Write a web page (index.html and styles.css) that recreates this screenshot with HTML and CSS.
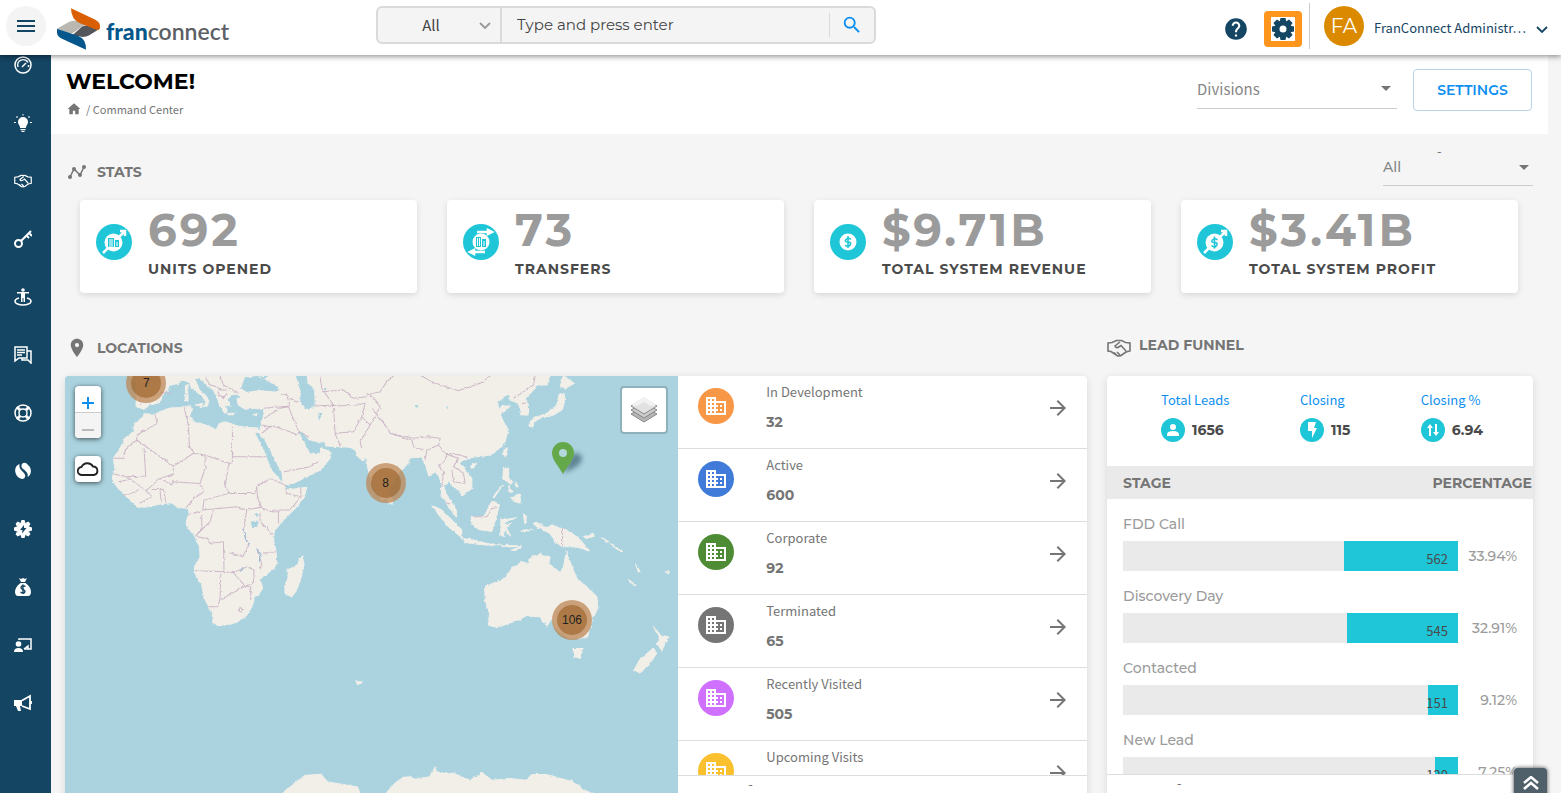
FILE: index.html
```html
<!DOCTYPE html>
<html lang="en">
<head>
  <meta charset="UTF-8" />
  <title>FranConnect - Command Center</title>
  <meta name="viewport" content="width=device-width, initial-scale=1.0" />
  <link rel="stylesheet" href="styles.css">
</head>
<body>

  <!-- Shared icons -->
  <svg class="icon-defs" aria-hidden="true">
    <symbol id="i-building" viewBox="0 0 24 24"><path d="M12 7V3H2v18h20V7H12zM6 19H4v-2h2v2zm0-4H4v-2h2v2zm0-4H4V9h2v2zm0-4H4V5h2v2zm4 12H8v-2h2v2zm0-4H8v-2h2v2zm0-4H8V9h2v2zm0-4H8V5h2v2zm10 12h-8v-2h2v-2h-2v-2h2v-2h-2V9h8v10zm-2-8h-2v2h2v-2zm0 4h-2v2h2v-2z"/></symbol>
    <symbol id="i-arrow" viewBox="0 0 24 24"><path d="M12 4l-1.41 1.41L16.17 11H4v2h12.17l-5.58 5.59L12 20l8-8z"/></symbol>
    <symbol id="i-caret" viewBox="0 0 10 5"><path d="M0 0h10L5 5z"/></symbol>
    <symbol id="i-chevron" viewBox="0 0 12 8"><path d="M1 1l5 5 5-5" fill="none" stroke="currentColor" stroke-width="1.8"/></symbol>
    <symbol id="i-handshake" viewBox="0 0 24 18"><path d="M1 4l4-.5 4.500-2h5l4 2 4.500.5v8l-4 1-5 3.500q-2 1-4 0l-6-4L1 12zM13 3L8 7q1 3 4.500.5L14 6.500l5 5.500M9 15.500l-2-2M13 16l-3-3" fill="none" stroke="currentColor" stroke-width="1.600"/></symbol>
  </svg>

  <!-- Top bar -->
  <header class="topbar">
    <div class="brand">
      <button class="menu-btn" aria-label="Menu">
        <svg width="18" height="12" viewBox="0 0 18 12"><path d="M0 0h18v2H0zM0 5h18v2H0zM0 10h18v2H0z"/></svg>
      </button>
      <a class="logo" href="#">
        <svg width="43" height="42" viewBox="171 25 129 125">
          <path fill="#b9b7af" d="M172 86l36-20q10-5 24-3l27 8-38 27q-8 5-20 1z"/>
          <path fill="#55565b" d="M217 106l29-25q8-6 22-3l31 9-31 19q-10 6-24 5z"/>
          <path fill="#d95f02" d="M213 25l70 33q17 8 17 20v6q-1 8-10 6l-50-20q-27-12-27-45z"/>
          <path fill="#05568b" d="M171 87l62 21q26 9 25 42l-72-33q-15-7-15-19z"/>
        </svg>
        <span><b>fran</b>connect</span>
      </a>
    </div>

    <form class="search">
      <div class="search-scope">
        <select aria-label="Search in"><option>All</option></select>
        <svg width="12" height="8"><use href="#i-chevron"/></svg>
      </div>
      <input type="text" aria-label="Search" placeholder="Type and press enter" />
      <button type="button" aria-label="Search">
        <svg width="22" height="22" viewBox="0 0 24 24"><path d="M15.500 14h-.79l-.28-.27A6.470 6.470 0 0 0 16 9.500 6.500 6.500 0 1 0 9.500 16c1.610 0 3.090-.59 4.230-1.570l.27.28v.79l5 4.990L20.490 19l-4.990-5zm-6 0C7.010 14 5 11.990 5 9.500S7.010 5 9.500 5 14 7.010 14 9.500 11.990 14 9.500 14z"/></svg>
      </button>
    </form>

    <div class="account">
      <button class="icon-btn" aria-label="Help">
        <svg width="26" height="26" viewBox="0 0 24 24"><path d="M12 2C6.480 2 2 6.480 2 12s4.480 10 10 10 10-4.480 10-10S17.520 2 12 2zm1 17h-2v-2h2v2zm2.070-7.750l-.9.92C13.450 12.900 13 13.500 13 15h-2v-.5c0-1.100.45-2.100 1.170-2.830l1.240-1.260c.37-.36.59-.86.59-1.410 0-1.100-.9-2-2-2s-2 .9-2 2H8c0-2.210 1.790-4 4-4s4 1.790 4 4c0 .88-.36 1.680-.93 2.250z"/></svg>
      </button>
      <button class="gear-btn" aria-label="Settings">
        <svg width="24" height="24" viewBox="-12 -12 24 24">
          <path fill="#fff" d="M-12-12h24v24h-24z"/>
          <path d="M-2.500-11h5l1 5h-7zM-2.500 11h5l1-5h-7zM-11-2.500v5l5 1v-7zM11-2.500v5l-5 1v-7z"/>
          <path transform="rotate(45)" d="M-2.500-11h5l1 5h-7zM-2.500 11h5l1-5h-7zM-11-2.500v5l5 1v-7zM11-2.500v5l-5 1v-7z"/>
          <circle r="8"/><circle r="3.500" fill="#fff"/>
        </svg>
      </button>
      <button class="user">
        <span class="avatar">FA</span>
        <span class="user-name">FranConnect Administr…</span>
        <svg width="12" height="8"><use href="#i-chevron"/></svg>
      </button>
    </div>
  </header>

  <div class="shell">
    <!-- Side navigation -->
    <nav class="sidenav">
      <a href="#" aria-label="Dashboard"><svg viewBox="0 0 18 18"><g fill="none" stroke="currentColor" stroke-width="1.500"><circle cx="9" cy="9" r="8"/><path d="M4 11a5.500 5.500 0 0 1 10-4.500M14.500 9v2M8 11l4-4"/></g></svg></a>
      <a href="#" aria-label="Ideas"><svg viewBox="0 0 18 18"><path d="M9 3a5 5 0 0 1 5 5c0 2.500-2 3.500-2.200 6H6.200C6 11.500 4 10.500 4 8a5 5 0 0 1 5-5zM6.500 15h5v1.200h-5zM7.500 17h3v1h-3zM8.500 0h1v1.500h-1zM0 8h2v1H0zM16 8h2v1h-2zM2 3l1-1 1 1-1 1zM14 3l1-1 1 1-1 1z"/></svg></a>
      <a href="#" aria-label="Sales"><svg viewBox="0 0 24 18"><use href="#i-handshake"/></svg></a>
      <a href="#" aria-label="Openings"><svg viewBox="0 0 18 18"><g fill="none" stroke="currentColor" stroke-width="2"><circle cx="4.500" cy="13.500" r="3.500"/><path d="M7 11L17 1M12.500 5.500L15 8M15 3l3 3"/></g></svg></a>
      <a href="#" aria-label="Locations"><svg viewBox="0 0 18 18"><circle cx="9" cy="2" r="1.800"/><path d="M3 4h12v1.500h-4V14H9.500v-4h-1v4H7V5.500H3z"/><path d="M5 10q-4 1-4 3.500c0 2 4 3.500 8 3.500s8-1.500 8-3.500Q17 11 13 10" fill="none" stroke="currentColor" stroke-width="1.600"/></svg></a>
      <a href="#" aria-label="Messages"><svg viewBox="0 0 18 18"><path d="M1 1h12v11H5l-4 3zM3 4h8M3 6.500h8M3 9h5M13 5h4v12l-3-3H8v-2" fill="none" stroke="currentColor" stroke-width="1.500"/></svg></a>
      <a href="#" aria-label="Support"><svg viewBox="0 0 18 18"><g fill="none" stroke="currentColor" stroke-width="1.500"><circle cx="9" cy="9" r="8"/><circle cx="9" cy="9" r="4"/></g><path d="M3 3l3 3M15 3l-3 3M3 15l3-3M15 15l-3-3" stroke="currentColor" stroke-width="3"/></svg></a>
      <a href="#" aria-label="Finance"><svg viewBox="0 0 18 18"><path d="M5.500 2C0 4 0 11 4 15c2 2 6 3 7 0 1-2-1-4-3-6S5 5 5.500 2zM7.500 3.500C8 0 12 0 14 3c4 3 4 10-.5 12 1-3-.5-4.500-3-7C8.500 6.500 7 5.500 7.500 3.500z"/></svg></a>
      <a href="#" aria-label="Automation"><svg viewBox="-9 -9 18 18"><path d="M-1.500-9h3l1 3h-5zM-1.500 9h3l1-3h-5zM-9-1.500v3l3 1v-5zM9-1.500v3l-3 1v-5z"/><path transform="rotate(45)" d="M-1.500-9h3l1 3h-5zM-1.500 9h3l1-3h-5zM-9-1.500v3l3 1v-5zM9-1.500v3l-3 1v-5z"/><circle r="6.500"/><path fill="#144563" d="M1-4l-4 5h2.500L-1 4.500 3.500-1H1z"/></svg></a>
      <a href="#" aria-label="Royalties"><svg viewBox="0 0 18 18"><path d="M5 0l2 1 2-1 2 1 2-1-2 4H7zM6.500 5h5c4 3 5.500 6 5.500 9 0 2-1 4-3 4H4c-2 0-3-2-3-4 0-3 1.500-6 5.500-9z"/><path d="M11.500 8.500Q9 7 7.500 8.500T9 11.500t1.500 3T6.500 14M9 6.500V16" fill="none" stroke="#144563" stroke-width="1.400"/></svg></a>
      <a href="#" aria-label="Training"><svg viewBox="0 0 18 18"><circle cx="4.500" cy="8" r="2.800"/><path d="M0 16q0-4 4.500-4T9 16z"/><path d="M5 4V3h12v10h-7M10 13l4-3v3" fill="none" stroke="currentColor" stroke-width="1.500"/></svg></a>
      <a href="#" aria-label="Marketing"><svg viewBox="0 0 18 18"><path d="M0 6h8v6H6l1 5H4l-2-5H0z"/><path d="M8 6.500L16 2v13l-8-3M17 7v3" fill="none" stroke="currentColor" stroke-width="1.800"/></svg></a>
    </nav>

    <main class="content">
      <!-- Page title -->
      <section class="page-head">
        <div>
          <h1>WELCOME!</h1>
          <p class="crumbs">
            <a href="#" aria-label="Home"><svg width="14" height="14" viewBox="0 0 24 24"><path d="M10 21v-6h4v6h6v-9h3L12 2 1 12h3v9z"/></svg></a>
            / Command Center
          </p>
        </div>
        <div class="head-actions">
          <div class="field field-wide">
            <select aria-label="Divisions"><option>Divisions</option></select>
            <svg width="10" height="5"><use href="#i-caret"/></svg>
          </div>
          <button class="settings-btn">SETTINGS</button>
        </div>
      </section>

      <!-- Stats -->
      <section class="stats">
        <div class="section-head">
          <h2>
            <svg width="20" height="20" viewBox="0 0 20 20"><path d="M3 15l4-8 6 6 4-8" fill="none" stroke="currentColor" stroke-width="1.500"/><circle cx="3" cy="15" r="2"/><circle cx="7" cy="7" r="2"/><circle cx="13" cy="13" r="2"/><circle cx="17" cy="5" r="2"/></svg>
            STATS
          </h2>
          <div class="stats-filter">
            <span>-</span>
            <div class="field">
              <select aria-label="Stats filter"><option>All</option></select>
              <svg width="10" height="5"><use href="#i-caret"/></svg>
            </div>
          </div>
        </div>

        <div class="stat-cards">
          <article class="stat">
            <svg class="badge" viewBox="0 0 36 36"><path d="M7 29l5-5M22 14l6-6M24 7h5v5" fill="none" stroke="currentColor" stroke-width="2.500"/><circle cx="17.500" cy="18.500" r="9"/><path fill="#1ec6d7" d="M12 14h6v9h-6zM18 16h5v7h-5z"/><path d="M14 15v8M16 15v8M18.500 16v7M21 18v4" stroke="currentColor"/></svg>
            <div><strong>692</strong><span>UNITS OPENED</span></div>
          </article>
          <article class="stat">
            <svg class="badge" viewBox="0 0 36 36"><path d="M14 8h14M25 6v4l4-2zM8 28h14M11 26v4l-4-2z" fill="none" stroke="currentColor" stroke-width="2.500"/><circle cx="18" cy="18" r="8.500"/><path fill="#1ec6d7" d="M13 13h5v10h-5zM18 15h5v8h-5z"/><path d="M14.500 14v8M16.500 14v8M18.500 15v8M21 17v5" stroke="currentColor"/></svg>
            <div><strong>73</strong><span>TRANSFERS</span></div>
          </article>
          <article class="stat">
            <svg class="badge" viewBox="0 0 36 36"><circle cx="18" cy="18" r="8.500"/><path d="M21 15.500q-3-2.500-5 0t2 2.500 2 3-5 0M18 12v12" fill="none" stroke="#1ec6d7" stroke-width="1.600"/></svg>
            <div><strong>$9.71B</strong><span>TOTAL SYSTEM REVENUE</span></div>
          </article>
          <article class="stat">
            <svg class="badge" viewBox="0 0 36 36"><path d="M7 29l5-5M22 14l6-6M24 7h5v5" fill="none" stroke="currentColor" stroke-width="2.500"/><circle cx="17.500" cy="18.500" r="9"/><path d="M20.500 16q-3-2.500-5 0t2 2.500 2 3-5 0M17.500 12.500v12" fill="none" stroke="#1ec6d7" stroke-width="1.600"/></svg>
            <div><strong>$3.41B</strong><span>TOTAL SYSTEM PROFIT</span></div>
          </article>
        </div>
      </section>

      <div class="panels">
        <!-- Locations -->
        <section>
          <h2>
            <svg width="24" height="20" viewBox="0 0 24 24"><path d="M12 1C8 1 4.500 4 4.500 8.500 4.500 14 12 23 12 23s7.500-9 7.500-14.500C19.500 4 16 1 12 1zm0 10a2.500 2.500 0 0 1 0-5 2.500 2.500 0 0 1 0 5z"/></svg>
            LOCATIONS
          </h2>
          <div class="panel locations">
            <div class="map">
              <svg class="map-canvas" viewBox="15 18 1839 1251">
                <defs>
                  <filter id="coast" x="0" y="0" width="1" height="1">
                    <feTurbulence type="fractalNoise" baseFrequency=".08" numOctaves="3" seed="4"/>
                    <feDisplacementMap in="SourceGraphic" scale="9" xChannelSelector="R" yChannelSelector="G"/>
                  </filter>
                </defs>
                <g filter="url(#coast)">
                  <path fill="#aad3df" d="M0 0h1900v1300H0z"/>
                  <g class="land">
                    <!-- Africa -->
                    <path d="M252 131L285 133 300 125 330 114 372 112 392 110 396 125 388 140 402 155 438 165 468 180 478 160 500 155 530 168 560 172 595 174 600 188 583 187 597 215 612 245 625 280 632 298 655 325 672 345 678 360 740 352 735 372 715 405 690 430 665 455 645 480 638 500 648 545 650 582 635 600 600 628 607 650 604 668 584 680 578 705 560 735 540 750 515 762 490 764 472 769 458 755 460 740 445 710 432 680 425 645 405 610 403 590 420 560 418 530 405 500 380 468 378 455 387 430 384 415 352 412 335 398 300 402 265 410 238 412 215 395 195 375 175 355 160 335 157 320 165 300 160 265 180 235 195 205 220 185 225 160 250 140z"/>
                    <!-- Eurasia -->
                    <path d="M200 0L215 25 230 35 228 108 250 118 270 105 298 98 303 80 325 60 330 45 355 40 368 30 383 35 400 58 428 80 438 95 430 110 442 108 447 95 440 80 420 62 412 45 405 28 418 22 435 40 460 60 470 80 480 110 495 130 502 122 495 105 512 108 500 90 512 75 530 72 545 82 530 88 535 105 555 118 580 115 612 115 608 150 598 185 603 200 612 205 630 240 650 280 665 305 672 345 700 340 745 318 780 300 810 265 812 250 785 232 780 250 750 252 735 225 725 205 712 185 728 185 745 208 770 215 790 215 800 228 870 232 885 240 895 260 910 272 920 260 922 290 935 340 965 390 978 385 990 350 1015 310 1045 278 1050 263 1085 262 1095 285 1107 318 1125 305 1137 320 1145 350 1143 372 1160 400 1180 430 1190 442 1188 420 1170 390 1158 372 1150 345 1165 335 1180 350 1200 362 1205 378 1235 355 1235 325 1215 300 1200 280 1215 265 1240 262 1290 255 1315 240 1335 215 1343 180 1330 155 1320 135 1350 108 1330 108 1318 115 1310 95 1345 75 1350 90 1375 100 1385 135 1405 135 1405 105 1395 85 1415 65 1430 45 1460 45 1475 0z"/>
                    <!-- Mediterranean islands -->
                    <path d="M376 48L384 48 383 68 376 68zM374 74L384 72 384 90 376 92zM408 104L428 100 424 113zM502 130L524 130 520 134 504 134zM580 134L594 130 590 137zM270 77L280 75 280 80z"/>
                    <!-- Madagascar, Sri Lanka, Hainan, Taiwan, Japan -->
                    <path d="M727 558L732 585 722 625 710 660 695 680 675 670 674 645 684 625 680 600 705 590zM988 378L1000 390 995 402 984 398zM1230 290L1248 279 1240 294zM1334 235L1342 235 1335 260 1328 250zM1497 70L1513 75 1512 98 1505 120 1480 135 1440 145 1420 155 1420 170 1410 170 1410 155 1424 143 1460 130 1490 105zM1510 18L1542 40 1515 55 1500 48z"/>
                    <!-- Philippines and Indonesia -->
                    <path d="M1330 292L1345 295 1346 325 1358 340 1350 342 1328 325zM1365 330L1374 350 1366 350zM1344 345L1358 365 1350 368zM1352 385L1378 372 1382 400 1365 395zM1328 345L1298 380 1302 382zM1115 405L1145 420 1190 465 1205 480 1205 502 1170 475 1140 440zM1205 505L1240 510 1280 520 1310 525 1275 525 1220 518zM1312 524L1350 526 1385 528 1350 531zM1355 540L1380 530 1366 542zM1233 440L1270 440 1295 395 1318 405 1308 440 1295 485 1255 478 1235 460zM1322 450L1370 443 1335 454 1330 465 1352 460 1338 473 1352 498 1342 490 1332 475 1330 500 1322 495zM1390 432L1400 440 1394 462zM1380 480L1420 480 1390 485z"/>
                    <path d="M1420 460L1445 462 1450 472 1475 465 1530 485 1560 510 1590 545 1550 530 1507 530 1485 515 1470 490 1430 470zM1570 500L1598 490 1602 498 1580 506zM1622 502L1645 514 1640 516zM1650 520L1686 544 1680 545zM1704 628L1728 646 1722 646zM1815 605L1824 602 1824 611zM1725 580L1740 605 1734 605z"/>
                    <!-- Australia and New Zealand -->
                    <path d="M1273 650L1335 625 1355 595 1385 575 1405 580 1415 560 1440 552 1470 560 1465 580 1500 608 1510 590 1518 545 1535 590 1550 625 1585 655 1610 680 1613 715 1595 750 1582 800 1530 805 1490 780 1475 745 1460 768 1440 740 1400 738 1360 755 1310 772 1285 765 1288 730 1275 690zM1538 835L1568 835 1560 865 1545 860zM1778 768L1800 795 1825 800 1805 840 1788 822 1798 805zM1778 835L1792 845 1765 885 1742 906 1720 902 1738 870z"/>
                    <!-- Antarctica -->
                    <path d="M651 1280L705 1240 735 1215 783 1212 801 1235 892 1250 904 1280zM968 1280L1006 1238 1036 1217 1066 1227 1109 1220 1123 1190 1130 1205 1181 1210 1229 1230 1265 1208 1295 1230 1350 1225 1398 1230 1416 1213 1458 1213 1536 1235 1573 1260 1621 1280zM888 932L905 936 892 944z"/>
                  </g>
                  <!-- Inland seas and lakes -->
                  <path fill="#aad3df" d="M542 55L555 22 590 18 612 30 652 48 658 66 600 60 560 66zM600 18L625 18 610 30zM705 10L740 18 742 40 762 55 764 110 735 118 720 92 722 65zM775 130l8 2-2 20-6-5zM790 55l10-2-4 8zM1065 105l8 0 0 8-8-2zM1153 110l10 0 0 8zM572 455l20-4 0 20-16 0zM585 430l14 4-8 8z"/>
                  <!-- Borders -->
                  <g class="borders">
                    <path d="M285 133L292 160 230 195 230 210 195 240 192 265 160 265M230 210L340 288 400 250 435 255 507 280 517 278 517 170M517 260L618 260M372 112L385 165 388 230 402 248M252 235L257 318 200 320 160 312M340 288L340 312 300 325 258 362 235 345 200 320M258 362L275 380 238 400M275 358L310 358 318 400M310 330L335 345 338 335 420 340 435 295 435 255M420 340L432 365 400 385 378 415M507 280L495 350 510 370 585 370 590 350M507 370L432 390 428 420 385 435M425 435L425 475 405 500M428 420L530 410 560 420 600 412 635 425 655 425 655 460M590 350L592 380 605 415M632 325L590 350M632 325L675 345 680 370 722 380 722 355M722 380L690 420 640 420M560 420L550 480 565 525 548 560 508 548M410 500L440 505 450 520 490 515 492 605 405 602M490 605L520 608 560 590 582 600 580 640 555 648 520 608M482 612L480 685 473 710 445 710M480 690L555 648 572 650 572 690M540 712l10 4-6 10-8-4zM600 430L600 455 638 492M600 550L648 545M590 535L605 580 600 597M460 420L450 455 412 492M300 360L303 395M190 375L215 370 235 360M175 335L200 330"/>
                    <path d="M605 190L630 170 605 165M612 145L660 115 685 110 715 185 745 200M630 165L690 185 712 195M672 305L750 290 775 275M612 115L690 108 680 75 660 70M690 85L715 95M765 108L820 105 825 190 840 228M825 190L880 185 905 140 915 100 890 105 830 108 820 105 785 55 780 20M785 65L850 60 880 85 920 80M920 75L960 65 980 35 1000 18M905 140L930 165 900 215 905 240M930 165L960 110 930 75M935 115L975 165 990 190 1055 210 1060 230 1090 240M990 190L1060 205 1105 200 1140 205 1135 225 1100 240 1095 270M1135 225L1160 255 1150 280 1135 285 1150 310 1145 350M1165 255L1195 265 1180 290 1210 310 1215 340 1180 335 1175 300M1155 250L1200 255 1220 262M1085 18L1125 40 1195 62 1260 40 1290 18M1360 85L1420 45 1425 18M1382 102L1398 98M1240 440L1280 440 1295 415 1310 412M1158 398L1170 402M1507 477L1507 530M240 52L242 105M300 68L330 70M435 20L450 45 470 50 480 60 500 60M480 18L490 45 535 70M470 65L490 85 500 70M240 50L228 58"/>
                  </g>
                  <path d="M553 478L555 505 567 525M590 535L600 550 598 575M540 605L550 595" fill="none" stroke="#8fb8d4" stroke-width="3"/>
                </g>
              </svg>

              <div class="zoom-ctrl">
                <button aria-label="Zoom in"><svg width="14" height="14" viewBox="0 0 14 14"><path d="M6 1h2v5h5v2H8v5H6V8H1V6h5z"/></svg></button>
                <button class="off" aria-label="Zoom out"><svg width="14" height="14" viewBox="0 0 14 14"><path d="M1 6h12v2H1z"/></svg></button>
              </div>
              <button class="cloud-ctrl" aria-label="Weather"><svg width="22" height="16" viewBox="0 0 22 16"><path d="M5 14a4 4 0 0 1-.5-8A6.500 6.500 0 0 1 16 5.500 4.300 4.300 0 0 1 17 14z" fill="none" stroke="currentColor" stroke-width="1.800"/></svg></button>
              <button class="layers-ctrl" aria-label="Layers">
                <svg width="28" height="28" viewBox="0 0 28 28"><path fill="#b5b5b5" stroke="#888" d="M1 18l13 8 13-8-13-7z"/><path fill="#ccc" stroke="#858585" d="M1 14l13 8 13-8-13-7z"/><path fill="#e2e2e2" stroke="#888" d="M1 10l13 8 13-8-13-8z"/><path fill="#f2f2f2" d="M1 9l13-8 13 8-7 1-6-4-7 4z"/></svg>
              </button>

              <span class="cluster c-europe"><span>7</span></span>
              <span class="cluster c-india"><span>8</span></span>
              <span class="cluster c-australia"><span>106</span></span>
              <svg class="pin" width="42" height="34" viewBox="0 0 42 34">
                <defs><filter id="soft" x="-.5" y="-.5" width="2" height="2"><feGaussianBlur stdDeviation="2.500"/></filter></defs>
                <path d="M11 31L20 12q9-3 10 5-2 8-19 14z" fill="#35596a" opacity=".65" filter="url(#soft)"/>
                <path fill="#65a84a" d="M11 0a11 11 0 0 1 11 11c0 7-8 15-11 21C8 26 0 18 0 11A11 11 0 0 1 11 0z"/><circle cx="11" cy="11" r="4" fill="#b3d9dc"/>
              </svg>
            </div>

            <div class="location-side">
              <ul class="location-list">
                <li><span class="dot orange"><svg><use href="#i-building"/></svg></span><div><span>In Development</span><b>32</b></div><a href="#" aria-label="In Development"><svg><use href="#i-arrow"/></svg></a></li>
                <li><span class="dot blue"><svg><use href="#i-building"/></svg></span><div><span>Active</span><b>600</b></div><a href="#" aria-label="Active"><svg><use href="#i-arrow"/></svg></a></li>
                <li><span class="dot green"><svg><use href="#i-building"/></svg></span><div><span>Corporate</span><b>92</b></div><a href="#" aria-label="Corporate"><svg><use href="#i-arrow"/></svg></a></li>
                <li><span class="dot grey"><svg><use href="#i-building"/></svg></span><div><span>Terminated</span><b>65</b></div><a href="#" aria-label="Terminated"><svg><use href="#i-arrow"/></svg></a></li>
                <li><span class="dot purple"><svg><use href="#i-building"/></svg></span><div><span>Recently Visited</span><b>505</b></div><a href="#" aria-label="Recently Visited"><svg><use href="#i-arrow"/></svg></a></li>
                <li><span class="dot yellow"><svg><use href="#i-building"/></svg></span><div><span>Upcoming Visits</span></div><a href="#" aria-label="Upcoming Visits"><svg><use href="#i-arrow"/></svg></a></li>
              </ul>
              <p class="panel-foot">-</p>
            </div>
          </div>
        </section>

        <!-- Lead funnel -->
        <section>
          <h2 class="funnel-title">
            <svg width="24" height="18"><use href="#i-handshake"/></svg>
            LEAD FUNNEL
          </h2>
          <div class="panel funnel">
            <div class="funnel-scroll">
              <div class="kpis">
                <div><a href="#">Total Leads</a><p><svg class="badge" viewBox="0 0 24 24"><path d="M12 6a3 3 0 1 1 0 6 3 3 0 0 1 0-6zm0 7c4 0 6 1.500 6 3v2H6v-2c0-1.500 2-3 6-3z"/></svg>1656</p></div>
                <div><a href="#">Closing</a><p><svg class="badge" viewBox="0 0 24 24"><path d="M8 4h8l-2 6h3l-5 10v-7H8z"/></svg>115</p></div>
                <div><a href="#">Closing %</a><p><svg class="badge" viewBox="0 0 24 24"><path d="M9 6l3 4h-2v8H8v-8H6zM15 18l-3-4h2V6h2v8h2z"/></svg>6.94</p></div>
              </div>
              <table>
                <thead><tr><th>STAGE</th><th>PERCENTAGE</th></tr></thead>
                <tbody>
                  <tr><td>FDD Call<div class="bar"><span style="width:34%">562</span></div></td><td>33.94%</td></tr>
                  <tr><td>Discovery Day<div class="bar"><span style="width:33%">545</span></div></td><td>32.91%</td></tr>
                  <tr><td>Contacted<div class="bar"><span style="width:9%">151</span></div></td><td>9.12%</td></tr>
                  <tr><td>New Lead<div class="bar"><span style="width:7%">120</span></div></td><td>7.25%</td></tr>
                </tbody>
              </table>
            </div>
            <p class="panel-foot">-</p>
          </div>
        </section>
      </div>
    </main>
  </div>

  <button class="to-top" aria-label="Back to top">
    <svg width="16" height="14" viewBox="0 0 16 14"><path d="M1 7l7-6 7 6M1 13l7-6 7 6" fill="none" stroke="currentColor" stroke-width="2.500"/></svg>
  </button>

</body>
</html>
```

FILE: styles.css
```css
* {
  box-sizing: border-box;
}

body {
  margin: 0;
  height: 100vh;
  overflow: hidden;
  display: flex;
  flex-direction: column;
  background: #f5f5f5;
  color: #757575;
  font: 13px/20px "Noto Sans CJK SC", sans-serif;
}

h1, h2, p, ul {
  margin: 0;
  padding: 0;
}

a {
  color: inherit;
  text-decoration: none;
}

svg {
  display: block;
  flex: none;
  fill: currentColor;
}

button, input, select {
  font: inherit;
  color: inherit;
  border: none;
  background: none;
  padding: 0;
}

button {
  cursor: pointer;
}

select {
  appearance: none;
  outline: none;
}

.icon-defs {
  position: absolute;
  width: 0;
  height: 0;
}

/* Top bar */
.topbar {
  position: relative;
  z-index: 2;
  flex: none;
  display: flex;
  align-items: flex-start;
  height: 55px;
  padding: 6px 13px 0 6px;
  background: #fff;
  color: #144563;
  box-shadow: 0 1px 6px rgba(0, 0, 0, 0.5);
}

.brand {
  display: flex;
  gap: 11px;
  flex: none;
  width: 370px;
}

.menu-btn {
  display: flex;
  align-items: center;
  justify-content: center;
  width: 40px;
  height: 40px;
  border-radius: 50%;
  background: #f4f4f4;
}

.logo {
  display: flex;
  gap: 6px;
  padding-top: 2px;
  color: #5d5f66;
  font: 600 23px/46px Lato, sans-serif;
}

.logo b {
  color: #05568b;
}

.search {
  display: flex;
  flex: 0 1 500px;
  height: 38px;
  border: 2px solid #dadada;
  border-radius: 6px;
  background: #f4f4f4;
  color: #444;
}

.search-scope {
  position: relative;
  width: 124px;
  border-right: 2px solid #dadada;
}

.search-scope select {
  width: 100%;
  height: 100%;
  padding-right: 16px;
  text-align: center;
  text-align-last: center;
  font-size: 15px;
}

.search-scope svg {
  position: absolute;
  right: 9px;
  top: 14px;
  color: #999;
}

.search input {
  flex: 1;
  min-width: 0;
  padding: 0 0 2px 15px;
  font: 15px Montserrat, Inter, sans-serif;
}

.search input::placeholder {
  color: #444;
}

.search button {
  align-self: center;
  width: 45px;
  height: 24px;
  padding-left: 11px;
  border-left: 1px solid #dadada;
  color: #0d8ff2;
}

.account {
  display: flex;
  align-items: center;
  margin-left: auto;
}

.icon-btn {
  padding-top: 2px;
}

.gear-btn {
  display: flex;
  align-items: center;
  justify-content: center;
  width: 38px;
  height: 36px;
  margin: 2px 7px 0 15px;
  border-radius: 4px;
  background: #ff951c;
}

.user {
  display: flex;
  align-items: center;
  gap: 10px;
  height: 46px;
  margin-top: -3px;
  padding-left: 14px;
  border-left: 1px solid #ccc;
}

.avatar {
  width: 40px;
  height: 40px;
  border-radius: 50%;
  background: #db8a00;
  color: #fff;
  font: 20px/40px Montserrat, Inter, sans-serif;
}

.user-name {
  width: 152px;
  padding-top: 4px;
  text-align: left;
  white-space: nowrap;
}

.user svg {
  margin-top: 8px;
}

/* Layout */
.shell {
  flex: 1;
  min-height: 0;
  display: flex;
}

.sidenav {
  flex: none;
  display: flex;
  flex-direction: column;
  gap: 40px;
  width: 51px;
  padding: 1px 0 0 14px;
  background: #144563;
  color: #fff;
}

.sidenav svg {
  width: 18px;
  height: 18px;
}

.content {
  flex: 1;
  min-width: 0;
  margin-right: 13px;
  overflow: hidden;
}

h1, h2 {
  font-family: Montserrat, Inter, sans-serif;
}

h1 {
  color: #000;
  font-size: 22px;
  line-height: 26px;
  font-weight: 700;
}

h2 {
  display: flex;
  align-items: center;
  gap: 8px;
  font-size: 14px;
  line-height: 20px;
  font-weight: 700;
}

/* Page title */
.page-head {
  display: flex;
  justify-content: space-between;
  height: 79px;
  padding: 14px 16px 0 15px;
  background: #fff;
}

.crumbs {
  display: flex;
  align-items: center;
  gap: 5px;
  padding: 4px 0 0 1px;
  font-size: 11px;
}

.head-actions {
  display: flex;
  gap: 16px;
}

.field {
  position: relative;
  width: 150px;
  height: 38px;
  border-bottom: 1px solid #ccc;
}

.field-wide {
  width: 200px;
  height: 40px;
}

.field select {
  width: 100%;
  height: 100%;
  font-size: 15px;
  color: #868686;
}

.field svg {
  position: absolute;
  right: 6px;
  top: 17px;
}

.stats-filter .field svg {
  right: 4px;
}

.settings-btn {
  width: 119px;
  height: 42px;
  border: 1px solid #b9d5ea;
  border-radius: 4px;
  color: #0d8ff2;
  font: 600 14px Montserrat, Inter, sans-serif;
}

/* Stats */
.stats {
  padding: 12px 15px 0 14px;
}

.section-head {
  display: flex;
  justify-content: space-between;
  height: 54px;
}

.section-head h2 {
  height: 52px;
  padding-left: 2px;
  gap: 10px;
}

.stats-filter span {
  display: block;
  height: 2px;
  padding-left: 54px;
  line-height: 10px;
}

.stats-filter .field select {
  font-family: Montserrat, Inter, sans-serif;
  font-size: 14px;
  font-weight: 500;
}

.stat-cards {
  display: grid;
  grid-template-columns: repeat(4, 1fr);
  gap: 30px;
  padding: 0 15px;
}

.stat {
  display: flex;
  gap: 16px;
  height: 93px;
  padding: 0 16px;
  border-radius: 4px;
  background: #fff;
  box-shadow: 0 2px 6px rgba(0, 0, 0, 0.12);
}

.badge {
  border-radius: 50%;
  background: #1ec6d7;
  color: #fff;
}

.stat .badge {
  width: 36px;
  height: 36px;
  margin-top: 24px;
}

.stat strong,
.stat span {
  display: block;
  font-family: Montserrat, Inter, sans-serif;
}

.stat strong {
  color: #9b9b9b;
  font-size: 45px;
  line-height: 59px;
  font-weight: 700;
  letter-spacing: 3px;
}

.stat span {
  color: #4a4a4a;
  font-size: 14px;
  line-height: 20px;
  font-weight: 700;
  letter-spacing: 1px;
}

/* Panels */
.panels {
  display: grid;
  grid-template-columns: 12fr 5fr;
  gap: 20px;
  padding: 45px 15px 0 14px;
}

.panel {
  height: 450px;
  margin-top: 18px;
  border-radius: 4px;
  background: #fff;
  box-shadow: 0 2px 8px rgba(0, 0, 0, 0.12);
}

.locations {
  display: grid;
  grid-template-columns: 3fr 2fr;
  overflow: hidden;
}

.map {
  position: relative;
  overflow: hidden;
  background: #aad3df;
}

.map-canvas {
  width: 100%;
}

.land {
  fill: #f2efe9;
  stroke: #f2efe9;
  stroke-width: 3;
}

.borders {
  fill: none;
  stroke: #cdb8c8;
  stroke-width: 3;
}

.zoom-ctrl,
.cloud-ctrl,
.layers-ctrl {
  position: absolute;
  left: 10px;
  border-radius: 4px;
  background: #fff;
  box-shadow: 0 1px 5px rgba(0, 0, 0, 0.65);
}

.zoom-ctrl {
  top: 10px;
  overflow: hidden;
}

.zoom-ctrl button {
  display: flex;
  align-items: center;
  justify-content: center;
  width: 26px;
  height: 26px;
  padding-top: 8px;
  color: #0d8ff2;
}

.zoom-ctrl .off {
  border-top: 1px solid #ccc;
  background: #f4f4f4;
  color: #bbb;
}

.cloud-ctrl {
  top: 80px;
  width: 26px;
  height: 26px;
  padding-left: 2px;
  color: #222;
}

.layers-ctrl {
  left: auto;
  right: 10px;
  top: 10px;
  width: 48px;
  height: 48px;
  padding-left: 8px;
  border: 2px solid #8fb1bb;
  box-shadow: none;
}

.cluster {
  position: absolute;
  width: 40px;
  height: 40px;
  padding: 5px;
  border-radius: 50%;
  background: rgba(190, 135, 85, 0.75);
}

.cluster span {
  display: block;
  border-radius: 50%;
  background: rgba(160, 105, 50, 0.7);
  color: #222;
  text-align: center;
  font: 12px/30px "Liberation Sans", sans-serif;
}

.c-europe {
  left: 10%;
  top: -13px;
}

.c-india {
  left: 49%;
  top: 87px;
}

.c-australia {
  left: calc(83% - 22px);
  top: 224px;
}

.pin {
  position: absolute;
  left: 487px;
  top: 66px;
  overflow: visible;
}

.location-list {
  height: 399px;
  overflow: hidden;
  list-style: none;
}

.location-list li {
  display: flex;
  height: 73px;
  padding: 0 17px 0 20px;
  border-bottom: 1px solid #ddd;
}

.dot {
  width: 36px;
  height: 36px;
  margin-top: 12px;
  padding: 6px;
  border-radius: 50%;
  color: #fff;
}

.location-list svg {
  width: 24px;
  height: 24px;
}

.orange { background: #f89746; }
.blue { background: #417bd9; }
.green { background: #4d8c34; }
.grey { background: #757575; }
.purple { background: #d070ff; }
.yellow { background: #fbc02d; }

.location-list div {
  flex: 1;
  padding: 6px 0 0 32px;
}

.location-list div span {
  display: block;
}

.location-list b {
  display: block;
  padding-top: 10px;
  font: 700 14px/20px Montserrat, Inter, sans-serif;
}

.location-list a {
  padding-top: 20px;
}

.panel-foot {
  padding-left: 70px;
  border-top: 1px solid #ddd;
  line-height: 16px;
}

/* Lead funnel */
.funnel-title {
  height: 14px;
}

.funnel-title svg {
  margin-top: 6px;
}

.funnel {
  margin-top: 24px;
}

.funnel-scroll {
  height: 398px;
  overflow: hidden;
}

.kpis {
  display: flex;
  justify-content: space-between;
  height: 90px;
  padding: 14px 50px 0 54px;
}

.kpis a {
  color: #0d8ff2;
}

.kpis p {
  display: flex;
  align-items: center;
  gap: 7px;
  padding-top: 8px;
  color: #4a4a4a;
  font: 700 14px/24px Montserrat, Inter, sans-serif;
}

.kpis .badge {
  width: 24px;
  height: 24px;
}

.funnel table {
  width: 100%;
  table-layout: fixed;
  border-collapse: collapse;
  font: 500 14px/20px Montserrat, Inter, sans-serif;
}

.funnel th {
  height: 33px;
  padding: 0 0 0 16px;
  background: #eaeaea;
  text-align: left;
  font-weight: 700;
}

/* heading is wider than its column and runs out to the left */
.funnel th:last-child {
  width: 75px;
  direction: rtl;
  padding: 0 1px 0 0;
}

.funnel td {
  padding: 15px 0 0 16px;
  color: #9b9b9b;
}

.funnel td:last-child {
  padding: 41px 16px 0 0;
  text-align: right;
  line-height: 30px;
}

.bar {
  display: flex;
  justify-content: flex-end;
  height: 30px;
  margin-top: 7px;
  background: #eaeaea;
}

.bar span {
  display: flex;
  justify-content: flex-end;
  padding-right: 10px;
  background: #1ec6d7;
  color: #4a4a4a;
  font: 13px/36px "Noto Sans CJK SC", sans-serif;
}

.to-top {
  position: fixed;
  right: 14px;
  bottom: -5px;
  z-index: 3;
  width: 33px;
  height: 30px;
  padding: 0 0 0 9px;
  border-radius: 4px;
  background: #4f606b;
  color: #fff;
  box-shadow: 0 0 4px #444;
}
```
